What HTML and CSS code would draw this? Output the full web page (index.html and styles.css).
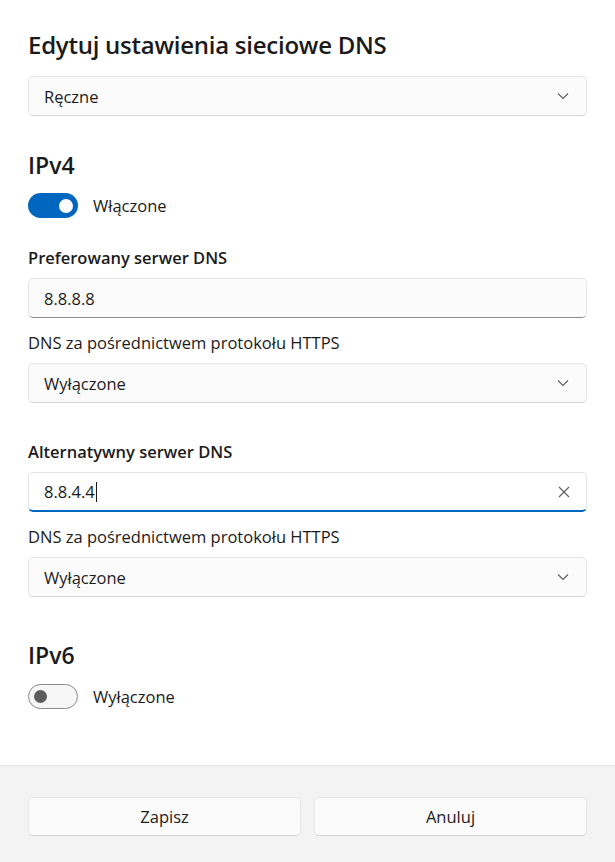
FILE: index.html
```html
<!DOCTYPE html>
<html lang="pl">
<head>
<meta charset="utf-8">
<title>Edytuj ustawienia sieciowe DNS</title>
<link rel="stylesheet" href="styles.css">
</head>
<body>
<div class="dialog">
  <main class="content">
    <h1 class="title">Edytuj ustawienia sieciowe DNS</h1>
    <div class="select mode">
      <span class="grow">Ręczne</span>
      <svg class="chev" width="12" height="8" viewBox="0 0 12 8"><path d="M1 1.5 L6 6.5 L11 1.5" fill="none" stroke="#5c5c5c" stroke-width="1.1"/></svg>
    </div>

    <h2 class="section">IPv4</h2>
    <div class="toggle-row">
      <span class="toggle on"><span class="knob"></span></span>
      <span class="toggle-label">Włączone</span>
    </div>

    <div class="field-label strong first">Preferowany serwer DNS</div>
    <div class="input"><span class="grow">8.8.8.8</span></div>
    <div class="field-label">DNS za pośrednictwem protokołu HTTPS</div>
    <div class="select">
      <span class="grow">Wyłączone</span>
      <svg class="chev" width="12" height="8" viewBox="0 0 12 8"><path d="M1 1.5 L6 6.5 L11 1.5" fill="none" stroke="#5c5c5c" stroke-width="1.1"/></svg>
    </div>

    <div class="field-label strong gap">Alternatywny serwer DNS</div>
    <div class="input focused">
      <span class="val">8.8.4.4</span><span class="caret"></span><span class="grow"></span>
      <svg class="clear" width="12" height="12" viewBox="0 0 12 12"><path d="M1 1 L11 11 M11 1 L1 11" fill="none" stroke="#5c5c5c" stroke-width="1.1"/></svg>
    </div>
    <div class="field-label">DNS za pośrednictwem protokołu HTTPS</div>
    <div class="select">
      <span class="grow">Wyłączone</span>
      <svg class="chev" width="12" height="8" viewBox="0 0 12 8"><path d="M1 1.5 L6 6.5 L11 1.5" fill="none" stroke="#5c5c5c" stroke-width="1.1"/></svg>
    </div>

    <h2 class="section v6">IPv6</h2>
    <div class="toggle-row v6row">
      <span class="toggle off"><span class="knob"></span></span>
      <span class="toggle-label">Wyłączone</span>
    </div>
  </main>
  <footer class="footer">
    <button class="btn">Zapisz</button>
    <button class="btn">Anuluj</button>
  </footer>
</div>
</body>
</html>
```
FILE: styles.css
```css
html, body {
  margin: 0;
  padding: 0;
  background: #ffffff;
}
body {
  font-family: "Segoe UI", "Open Sans", "Noto Sans", sans-serif;
  color: #1b1b1b;
  font-size: 16.5px;
}
.dialog {
  width: 615px;
  height: 862px;
  display: flex;
  flex-direction: column;
}
.content {
  flex: 1;
  padding: 29px 28px 0 28px;
  display: flex;
  flex-direction: column;
}
.title {
  margin: 0;
  font-size: 24px;
  font-weight: 600;
  line-height: 32px;
  letter-spacing: -0.25px;
}
.select, .input {
  box-sizing: border-box;
  height: 40px;
  border: 1px solid #e5e5e5;
  border-bottom-color: #d4d4d4;
  border-radius: 5px;
  background: #fbfbfb;
  display: flex;
  align-items: center;
  padding: 0 16px 0 15px;
}
.grow {
  flex: 1;
}
.mode {
  margin-top: 15px;
}
.chev {
  margin-right: 1px;
}
.section {
  margin: 34px 0 0 0;
  font-size: 23px;
  font-weight: 600;
  line-height: 30px;
}
.section.v6 {
  margin-top: 43px;
}
.toggle-row {
  display: flex;
  align-items: center;
  gap: 15px;
  margin-top: 13px;
}
.toggle-row.v6row {
  margin-top: 14px;
}
.toggle {
  box-sizing: border-box;
  width: 50px;
  height: 25px;
  border-radius: 13px;
  display: flex;
  align-items: center;
  padding: 0 5px;
}
.toggle.on {
  background: #0067c0;
  justify-content: flex-end;
}
.toggle.on .knob {
  width: 14px;
  height: 14px;
  background: #ffffff;
  border-radius: 50%;
}
.toggle.off {
  border: 1.25px solid #8a8a8a;
  background: #f6f6f6;
  justify-content: flex-start;
  padding: 0 5px;
}
.toggle.off .knob {
  width: 13px;
  height: 13px;
  background: #5d5d5d;
  border-radius: 50%;
}
.field-label {
  line-height: 24px;
  margin: 13px 0 8px 0;
}
.field-label.strong {
  font-weight: 600;
}
.field-label.first {
  margin-top: 28px;
}
.field-label.gap {
  margin-top: 37px;
}
.input {
  border-bottom: 1px solid #8a8a8a;
}
.input.focused {
  background: #ffffff;
  border-bottom: 2px solid #0067c0;
}
.val {
  flex: 0 0 auto;
}
.caret {
  flex: 0 0 auto;
  width: 0;
  height: 20px;
  border-left: 1px solid #1b1b1b;
  margin-left: 1px;
}
.footer {
  height: 97px;
  box-sizing: border-box;
  background: #f3f3f3;
  border-top: 1px solid #e5e5e5;
  display: grid;
  grid-template-columns: 1fr 1fr;
  gap: 13px;
  padding: 31px 28px 0 28px;
  align-items: start;
}
.btn {
  height: 39px;
  border: 1px solid #e5e5e5;
  border-bottom-color: #d0d0d0;
  border-radius: 5px;
  background: #fbfbfb;
  font-family: inherit;
  font-size: 16.5px;
  color: #1b1b1b;
}
```
